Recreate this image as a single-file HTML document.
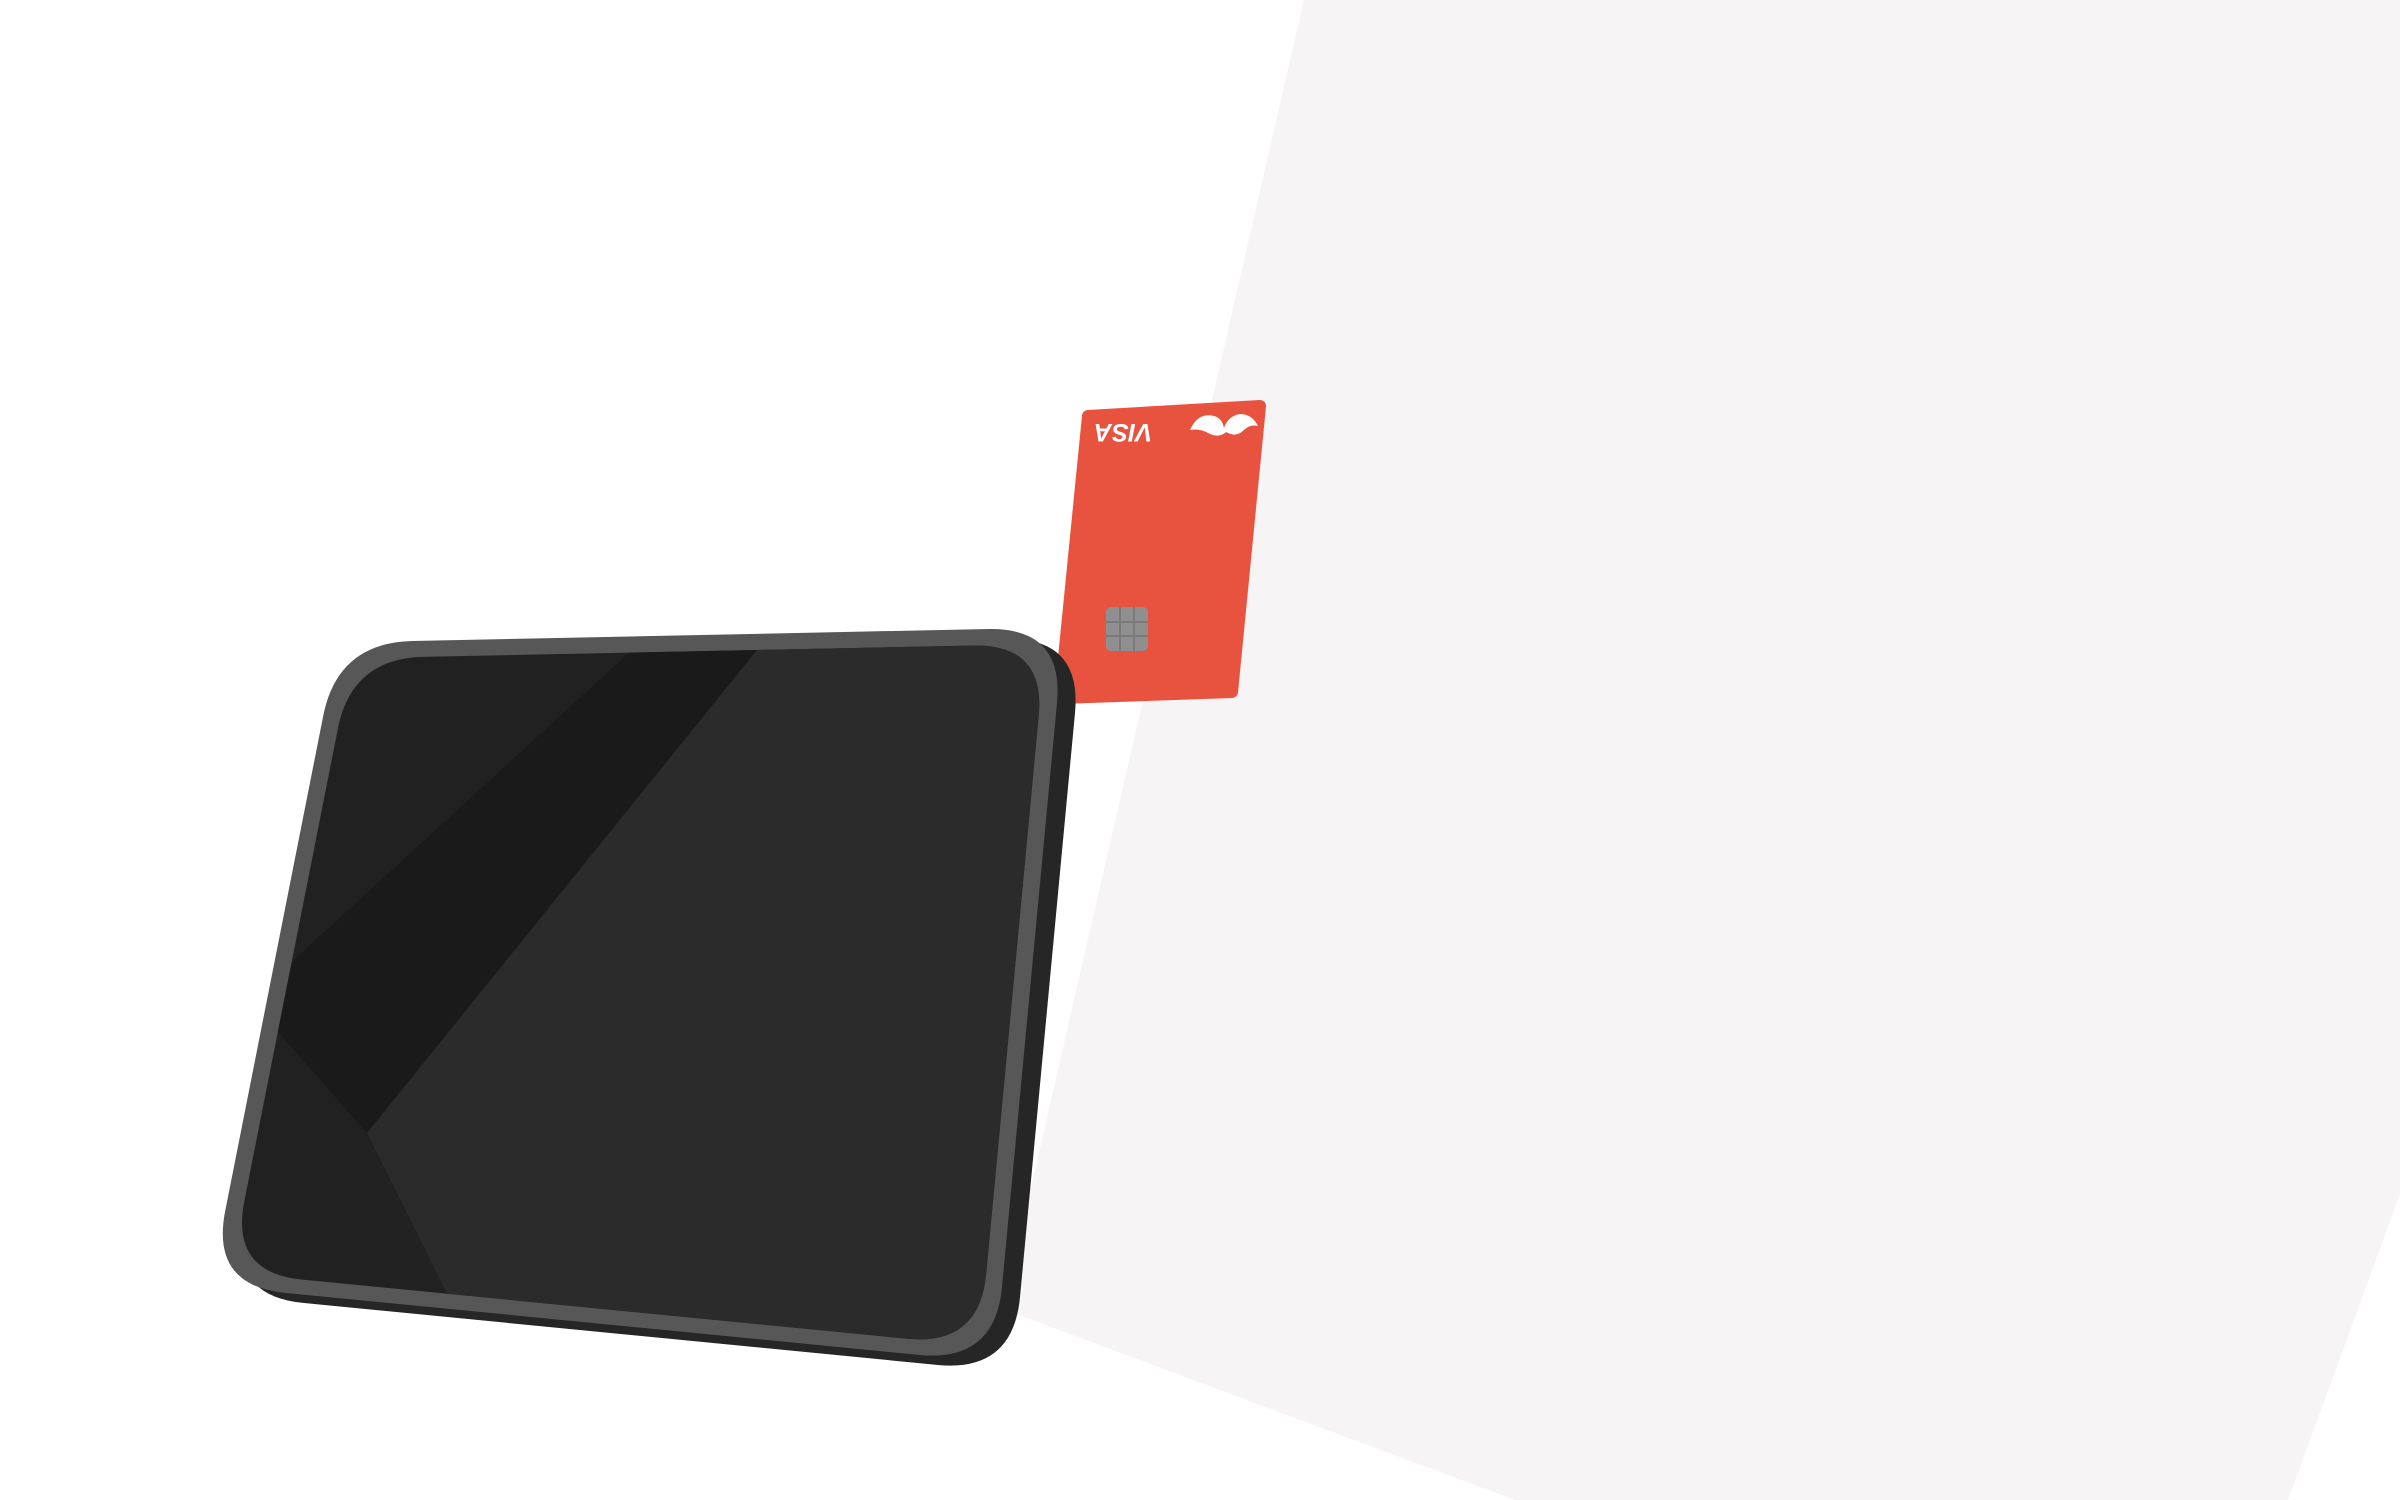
<!DOCTYPE html>
<html><head><meta charset="utf-8"><style>
html,body{margin:0;padding:0;background:#fff;}
svg{display:block}
</style></head><body>
<svg width="2400" height="1500" viewBox="0 0 2400 1500" xmlns="http://www.w3.org/2000/svg">
<defs>
<path id="dev" d="M412,641 L989,629 Q1064,628 1057,703 L1002,1287 Q995,1362 920,1355 L286,1293 Q211,1286 225,1212 L323,717 Q337,643 412,641 Z"/>
<clipPath id="scr"><use href="#dev" transform="translate(650,995) scale(0.955) translate(-650,-995)"/></clipPath>
</defs>
<rect width="2400" height="1500" fill="#ffffff"/>
<polygon points="1304,0 2400,0 2400,1194 2288,1500 1515,1500 1003,1309" fill="#f6f4f5"/>
<!-- card -->
<polygon points="1088,416 1260,406 1232,692 1060,698" fill="#e8533f" stroke="#e8533f" stroke-width="12" stroke-linejoin="round"/>
<g transform="rotate(180 1123 433)">
<text x="1123" y="442" font-family="Liberation Sans, sans-serif" font-weight="bold" font-style="italic" font-size="25" fill="#fff" text-anchor="middle">VISA</text>
</g>
<path d="M1190,430 Q1198,412 1214,416 Q1222,418 1224,428 Q1228,416 1240,414 Q1252,414 1258,426 Q1250,424 1244,430 Q1236,438 1226,432 Q1220,438 1210,434 Q1200,428 1190,430 Z" fill="#fff"/>
<rect x="1106" y="607" width="42" height="44" rx="5" fill="#8f8f8f"/>
<path d="M1120,607v44M1134,607v44M1106,622h42M1106,636h42" stroke="#7a7a7a" stroke-width="2"/>
<!-- device thickness -->
<use href="#dev" fill="#262626" transform="translate(18,10)"/>
<!-- bezel -->
<use href="#dev" fill="#575757"/>
<g clip-path="url(#scr)">
<rect x="150" y="600" width="1000" height="800" fill="#212121"/>
<polygon points="643,640 765,640 367,1133 250,1000" fill="#1a1a1a"/>
<polygon points="765,640 1100,640 1000,1400 500,1400 367,1133" fill="#2b2b2b"/>
</g>
</svg>
</body></html>
